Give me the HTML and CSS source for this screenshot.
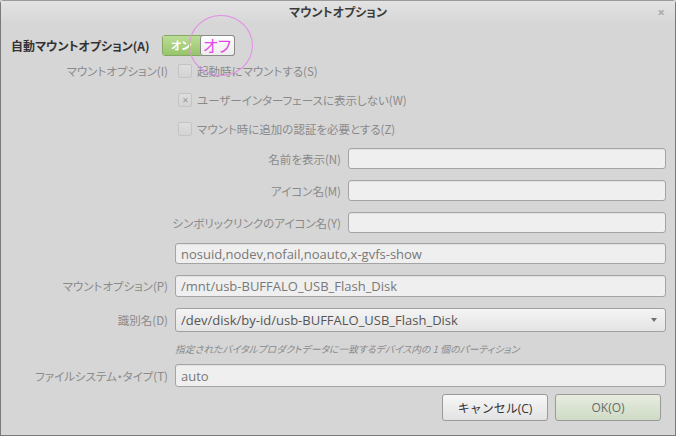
FILE: index.html
```html
<!DOCTYPE html>
<html lang="ja">
<head>
    <meta charset="UTF-8">
    <title>マウントオプション</title>
    <link rel="stylesheet" href="styles.css">
</head>
<body>
    <div class="window">
        <div class="titlebar">
            <span class="title">マウントオプション</span>
            <span class="close">×</span>
        </div>

        <div class="content">
            <!-- 自動マウント -->
            <div class="row row-switch">
                <span class="main-label">自動マウントオプション(A)</span>
                <div class="switch">
                    <span class="switch-on">オン</span>
                    <span class="switch-off">オフ</span>
                    <span class="ring"></span>
                </div>
            </div>

            <div class="row row-check first">
                <label class="label">マウントオプション(I)</label>
                <div class="field check">
                    <span class="box"></span>
                    <span>起動時にマウントする(S)</span>
                </div>
            </div>
            <div class="row row-check second">
                <label class="label"></label>
                <div class="field check">
                    <span class="box checked">✕</span>
                    <span>ユーザーインターフェースに表示しない(W)</span>
                </div>
            </div>
            <div class="row row-check third">
                <label class="label"></label>
                <div class="field check">
                    <span class="box"></span>
                    <span>マウント時に追加の認証を必要とする(Z)</span>
                </div>
            </div>

            <div class="row row-inner">
                <label class="label"></label>
                <div class="field inner">
                    <div class="inner-row">
                        <label class="inner-label">名前を表示(N)</label>
                        <div class="entry"></div>
                    </div>
                    <div class="inner-row">
                        <label class="inner-label">アイコン名(M)</label>
                        <div class="entry"></div>
                    </div>
                    <div class="inner-row">
                        <label class="inner-label">シンボリックリンクのアイコン名(Y)</label>
                        <div class="entry"></div>
                    </div>
                </div>
            </div>

            <div class="row row-entry opts">
                <label class="label"></label>
                <div class="entry">nosuid,nodev,nofail,noauto,x-gvfs-show</div>
            </div>
            <div class="row row-entry mnt">
                <label class="label">マウントオプション(P)</label>
                <div class="entry">/mnt/usb-BUFFALO_USB_Flash_Disk</div>
            </div>
            <div class="row row-combo">
                <label class="label">識別名(D)</label>
                <div class="combo">
                    <span>/dev/disk/by-id/usb-BUFFALO_USB_Flash_Disk</span>
                    <span class="arrow"></span>
                </div>
            </div>
            <div class="row row-hint">
                <label class="label"></label>
                <div class="hint">指定されたバイタルプロダクトデータに一致するデバイス内の 1 個のパーティション</div>
            </div>
            <div class="row row-entry fstype">
                <label class="label">ファイルシステム・タイプ(T)</label>
                <div class="entry">auto</div>
            </div>

            <div class="buttons">
                <button class="btn cancel">キャンセル(C)</button>
                <button class="btn ok">OK(O)</button>
            </div>
        </div>
    </div>
</body>
</html>
```

FILE: styles.css
```css
* {
    box-sizing: border-box;
    margin: 0;
    padding: 0;
}

body {
    width: 676px;
    height: 436px;
    font-family: "Open Sans", "Noto Sans CJK JP", sans-serif;
    font-size: 12px;
    font-feature-settings: "palt";
    background-color: #d6d6d6;
    overflow: hidden;
}

.window {
    width: 676px;
    height: 436px;
    border: 1px solid #7a7a7a;
    border-top-color: #9a9a9a;
    border-radius: 4px 4px 0 0;
    background-color: #d6d6d6;
}

.titlebar {
    position: relative;
    height: 21px;
    display: flex;
    justify-content: center;
    align-items: center;
    background: linear-gradient(#e3e3e3, #d7d7d7);
}

.title {
    font-family: "Noto Sans CJK JP", sans-serif;
    font-weight: bold;
    font-size: 12px;
    color: #3c3c3c;
}

.close {
    position: absolute;
    right: 10px;
    top: 2px;
    font-size: 13px;
    font-weight: bold;
    color: #a8a8a8;
}

.content {
    padding: 0 9px 0 10px;
}

.row {
    display: flex;
    align-items: center;
    gap: 7px;
}

.label,
.inner-label {
    width: 157px;
    flex-shrink: 0;
    display: flex;
    justify-content: flex-end;
    white-space: nowrap;
    color: #8a8a8a;
    font-family: "Noto Sans CJK JP", sans-serif;
    font-size: 11.5px;
}

.inner-label {
    width: 166px;
}

.row-switch {
    height: 24px;
    margin-top: 11px;
    gap: 12px;
}

.main-label {
    font-family: "Noto Sans CJK JP", sans-serif;
    font-weight: bold;
    font-size: 12px;
    color: #333;
}

.switch {
    position: relative;
    display: flex;
    height: 21px;
    width: 73px;
    border: 1px solid #86a865;
    border-radius: 3px;
}

.switch-on {
    width: 37px;
    display: flex;
    align-items: center;
    justify-content: center;
    background: linear-gradient(#bcdc97, #97c56a);
    color: #fff;
    font-family: "Noto Sans CJK JP", sans-serif;
    font-weight: bold;
    font-size: 11px;
}

.switch-off {
    flex: 1;
    display: flex;
    align-items: center;
    justify-content: center;
    background: linear-gradient(#ffffff, #ececec);
    border: 1px solid #8a8a8a;
    margin: -1px -1px -1px 0;
    border-radius: 3px;
    color: #e246e6;
    font-family: "Noto Sans CJK JP", sans-serif;
    font-size: 16px;
    line-height: 1;
}

.ring {
    position: absolute;
    left: 26px;
    top: -21px;
    width: 64px;
    height: 61px;
    border: 1.5px solid #e48de8;
    border-radius: 50%;
    pointer-events: none;
}

.row-check {
    height: 29px;
}

.row-check.first {
    height: 28px;
}

.check {
    display: flex;
    align-items: center;
    gap: 5px;
    padding-left: 3px;
    color: #8a8a8a;
    font-family: "Noto Sans CJK JP", sans-serif;
    font-size: 11.5px;
}

.box {
    width: 14px;
    height: 14px;
    border: 1px solid #c4c4c4;
    border-radius: 2px;
    background: linear-gradient(#dedede, #d3d3d3);
    display: flex;
    align-items: center;
    justify-content: center;
    font-size: 8px;
    color: #9a9a9a;
}

.row-inner {
    margin-top: 5px;
    align-items: flex-start;
}

.inner {
    flex: 1;
    display: flex;
    flex-direction: column;
    gap: 11px;
}

.inner-row {
    display: flex;
    align-items: center;
    gap: 7px;
}

.entry {
    flex: 1;
    height: 21px;
    padding: 0 5px;
    display: flex;
    align-items: center;
    background-color: #efefef;
    border: 1px solid #a4a4a4;
    border-radius: 3px;
    box-shadow: inset 0 1px 1px rgba(0,0,0,0.06);
    color: #787878;
    font-size: 13px;
    white-space: nowrap;
}

.row-entry.opts {
    margin-top: 10px;
}

.row-entry.mnt {
    margin-top: 11px;
}

.row-entry.mnt .entry {
    height: 22px;
}

.row-combo {
    margin-top: 11px;
}

.combo {
    flex: 1;
    height: 24px;
    padding: 0 8px 0 5px;
    display: flex;
    align-items: center;
    justify-content: space-between;
    background: linear-gradient(#f4f4f4, #e4e4e4);
    border: 1px solid #a0a0a0;
    border-radius: 3px;
    color: #555;
    font-size: 13px;
}

.arrow {
    width: 0;
    height: 0;
    border-left: 3.5px solid transparent;
    border-right: 3.5px solid transparent;
    border-top: 4px solid #707070;
}

.row-hint {
    height: 17px;
    margin-top: 8px;
}

.hint {
    font-family: "Noto Sans CJK JP", sans-serif;
    font-style: italic;
    font-size: 9.8px;
    color: #8c8c8c;
    white-space: nowrap;
}

.row-entry.fstype {
    margin-top: 7px;
}

.row-entry.fstype .entry {
    height: 23px;
}

.buttons {
    display: flex;
    justify-content: flex-end;
    gap: 7px;
    margin-top: 7px;
    padding-right: 5px;
}

.btn {
    width: 106px;
    height: 27px;
    border: 1px solid #9a9a9a;
    border-radius: 3px;
    font-family: "Open Sans", "Noto Sans CJK JP", sans-serif;
    font-size: 12px;
}

.cancel {
    background: linear-gradient(#f7f7f7, #e2e2e2);
    color: #333;
}

.ok {
    background: linear-gradient(#e6ecdf, #cfdbc6);
    color: #6a6a6a;
}
```
